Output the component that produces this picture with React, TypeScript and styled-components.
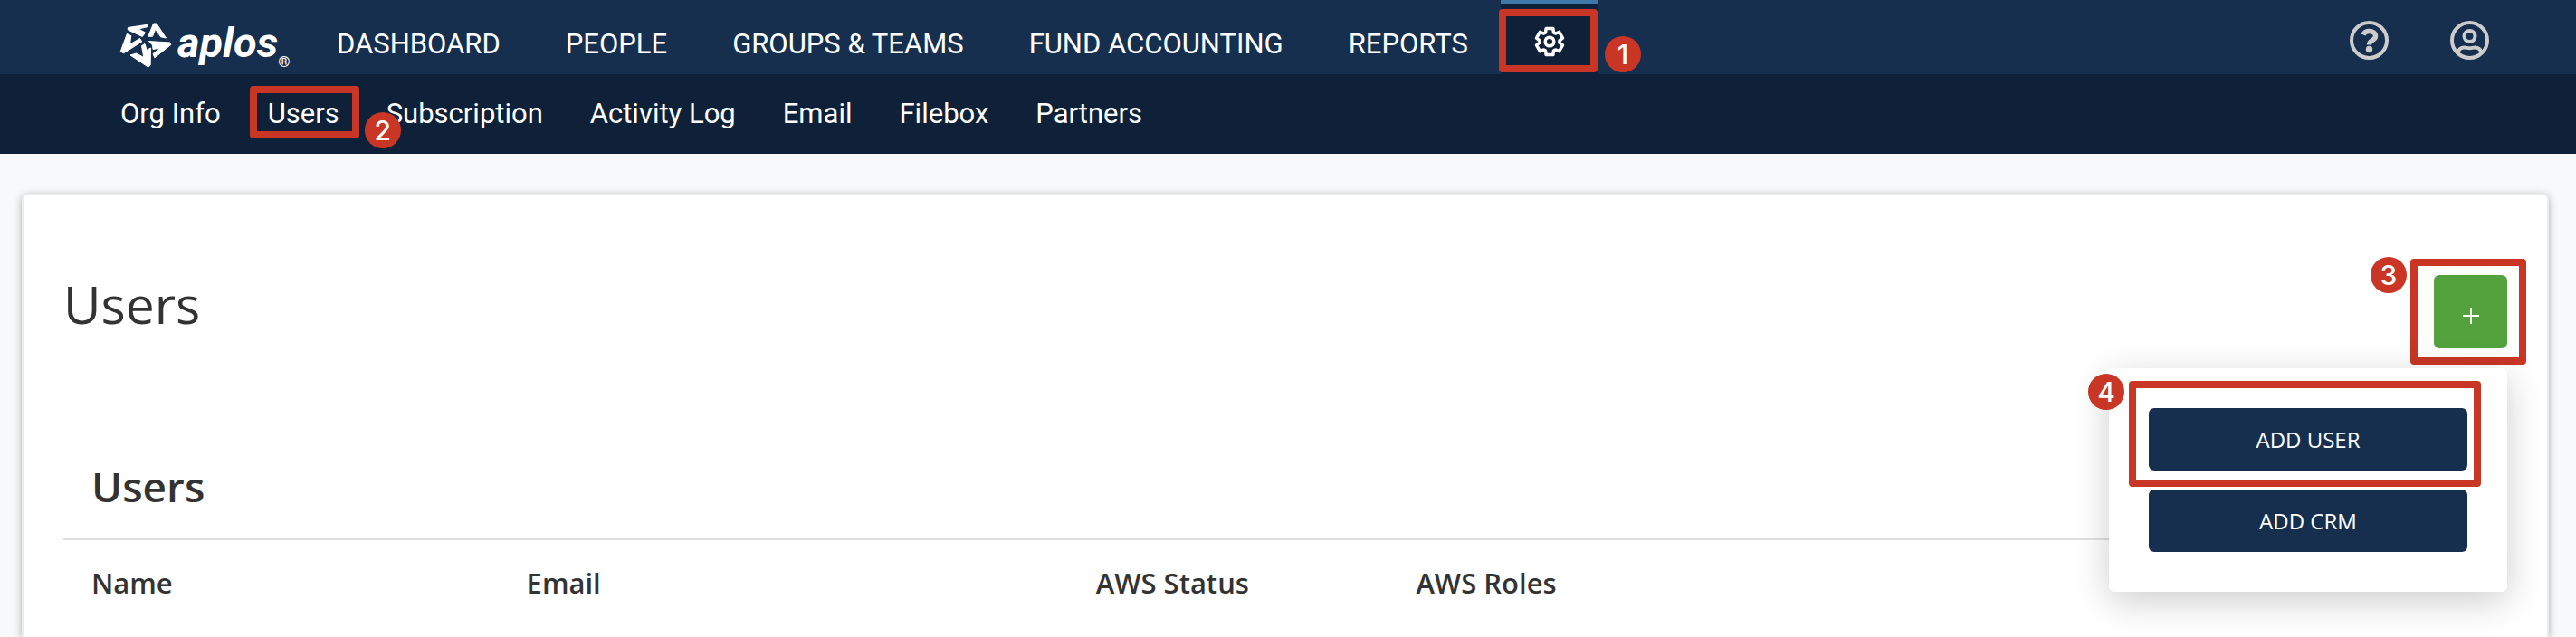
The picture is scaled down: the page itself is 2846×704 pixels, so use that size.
import React from 'react';
import styled, { createGlobalStyle, css } from 'styled-components';

const roboto = `Roboto, "Liberation Sans", sans-serif`;
const openSans = `"Open Sans", "Noto Sans", sans-serif`;

const GlobalStyle = createGlobalStyle`
  * { box-sizing: border-box; }
  body { margin: 0; background: #f8f9fb; color: #333; font-family: ${openSans}; }
`;

const Page = styled.div`
  display: flex;
  flex-direction: column;
  min-height: 100vh;
`;

const TopBar = styled.header`
  display: flex;
  height: 82px;
  padding-left: 132px;
  padding-right: 96px;
  background: #172f4e;
  font-family: ${roboto};
`;

const Brand = styled.a`
  display: flex;
  align-items: flex-start;
  width: 204px;
  color: #fff;
  text-decoration: none;
`;

const BrandMark = styled.svg`
  width: 58px;
  height: 52px;
  margin-top: 24px;
`;

const BrandName = styled.span`
  margin-left: 6px;
  font: italic 700 47px/60px ${roboto};
  padding-top: 17px;
`;

const Registered = styled.span`
  font-size: 17px;
  line-height: 16px;
  margin-top: 60px;
`;

const MainNav = styled.nav`
  display: flex;
  flex: 1;
`;

const mainItem = css`
  display: flex;
  align-items: center;
  color: #fff;
  font-size: 31px;
  line-height: 38px;
  text-decoration: none;
  white-space: nowrap;
`;

const MainLink = styled.a`
  ${mainItem}
  padding: 16px 36px 0;
`;

const SettingsLink = styled.a`
  ${mainItem}
  position: relative;
  padding: 5px 37px 0;
  border-top: 4px solid #3f78a8;
  background: #0f2138;
`;

const Account = styled.div`
  display: flex;
  align-items: center;
  gap: 68px;
  padding-top: 6px;
`;

const IconButton = styled.button`
  display: flex;
  padding: 0;
  border: 0;
  background: none;
  color: #ccc;
`;

const SubNav = styled.nav`
  display: flex;
  gap: 52px;
  height: 88px;
  padding: 0 133px;
  background: #0f2138;
  font-family: ${roboto};
`;

const SubLink = styled.a`
  position: relative;
  padding-top: 25px;
  color: #fff;
  font-size: 31px;
  line-height: 38px;
  text-decoration: none;
  white-space: nowrap;
`;

const Highlight = styled.span<{ $inset: string }>`
  position: absolute;
  inset: ${(p) => p.$inset};
  border: 8px solid #c93625;
  border-radius: 4px;
  pointer-events: none;
`;

const Badge = styled.span<{ $left: number; $top: number }>`
  position: absolute;
  left: ${(p) => p.$left}px;
  top: ${(p) => p.$top}px;
  z-index: 1;
  width: 40px;
  height: 40px;
  border-radius: 50%;
  background: #c93625;
  color: #fff;
  font: 500 30px/40px Inter, sans-serif;
  text-align: center;
`;

const Card = styled.main`
  flex: 1;
  margin: 44px 30px 0 24px;
  padding: 88px 44px 0;
  border: 2px solid #ebecee;
  border-bottom: 0;
  border-radius: 6px 6px 0 0;
  background: #fff;
  box-shadow: 0 2px 10px rgba(0, 0, 0, 0.3);
`;

const PageHeader = styled.div`
  display: flex;
  justify-content: space-between;
`;

const PageTitle = styled.h1`
  margin: 0;
  font-size: 57px;
  line-height: 64px;
  font-weight: 400;
`;

const AddArea = styled.div`
  position: relative;
`;

const AddButton = styled.button`
  display: flex;
  align-items: center;
  justify-content: center;
  width: 81px;
  height: 81px;
  padding: 9px 0 0;
  border: 0;
  border-radius: 6px;
  background: #54a23d;
`;

const AddMenu = styled.div`
  position: absolute;
  top: 103px;
  right: 0;
  display: grid;
  gap: 21px;
  width: 440px;
  padding: 44px;
  border-radius: 6px;
  background: #fff;
  box-shadow: 0 10px 40px rgba(0, 0, 0, 0.2);
`;

const MenuButton = styled.button`
  height: 69px;
  border: 0;
  border-radius: 6px;
  background: #172f4e;
  color: #fff;
  font: 400 24px/34px ${openSans};
`;

const SectionTitle = styled.h2`
  margin: 0;
  padding: 117px 31px 23px;
  border-bottom: 2px solid #e0e0e0;
  font-size: 46px;
  line-height: 70px;
  font-weight: 600;
`;

const Table = styled.table`
  width: 100%;
  border-collapse: collapse;
  table-layout: fixed;
`;

const HeadCell = styled.th<{ $share?: string }>`
  width: ${(p) => p.$share ?? 'auto'};
  padding: 26px 31px;
  font-size: 31px;
  line-height: 42px;
  font-weight: 600;
  text-align: left;
`;

// Outline of a six-toothed gear centred on (17, 17).
const gearOutline = Array.from({ length: 6 }, (_, i) => i * 60 - 90)
  .flatMap((a) => [
    [a - 24, 11],
    [a - 15, 15],
    [a + 15, 15],
    [a + 24, 11],
  ])
  .map(([deg, r]) => {
    const t = (deg * Math.PI) / 180;
    return `${(17 + r * Math.cos(t)).toFixed(2)},${(17 + r * Math.sin(t)).toFixed(2)}`;
  })
  .join(' ');

const Gear = () => (
  <svg width="34" height="34" viewBox="0 0 34 34" fill="none" stroke="currentColor" strokeWidth="3.5" strokeLinejoin="round" aria-hidden="true">
    <polygon points={gearOutline} />
    <circle cx="17" cy="17" r="4.8" />
  </svg>
);

const sections = ['DASHBOARD', 'PEOPLE', 'GROUPS & TEAMS', 'FUND ACCOUNTING', 'REPORTS'];
const pages = ['Org Info', 'Users', 'Subscription', 'Activity Log', 'Email', 'Filebox', 'Partners'];
const columns = [
  { name: 'Name', share: '17.8%' },
  { name: 'Email', share: '23.3%' },
  { name: 'AWS Status', share: '13.1%' },
  { name: 'AWS Roles' },
];

export default function App() {
  return (
    <Page>
      <GlobalStyle />
      <TopBar>
        <Brand href="#">
          <BrandMark viewBox="0 0 58 52" fill="#fff" stroke="#fff" strokeLinejoin="round" aria-hidden="true">
            <path d="M9.300 6.500 31.300 3.200 30.500 5.800 21 8 28.500 12 25.300 16.500 9.300 9Z" />
            <path d="M37.500 2h3.500L51.500 18 45.500 16.800 39.700 8.300 36.500 16.300H31.800Z" />
            <path d="M32.500 21.500 56 23 56.800 25.500 38.900 39.800 37 35.500 45 29 37 30.500 36.500 26Z" />
            <path d="M28 24.500 30.200 31.500 34.500 29 34.200 47.500 32 50.300 12 37 18.700 35 26.800 39.500 24.500 26.500Z" />
            <path d="M8.300 13.500 12.800 15.500 11.500 25 22.500 18.500 24.800 22 4.700 34.800 1.200 33Z" />
          </BrandMark>
          <BrandName>aplos</BrandName>
          <Registered>®</Registered>
        </Brand>
        <MainNav aria-label="Main">
          {sections.map((s) => <MainLink key={s} href="#">{s}</MainLink>)}
          <SettingsLink href="#" aria-label="Settings">
            <Gear />
            <Highlight $inset="6px 1px 2px -2px" />
            <Badge $left={115} $top={36}>1</Badge>
          </SettingsLink>
        </MainNav>
        <Account>
          <IconButton aria-label="Help">
            <svg width="43" height="43" viewBox="0 0 43 43" fill="none" stroke="currentColor">
              <circle cx="21.500" cy="21.500" r="19.500" strokeWidth="4" />
              <path d="M15 15.500c1-2.800 3.500-4 6.500-4 4 0 7 2 7 5.500 0 5-7 4-7 9.500" strokeWidth="5.500" />
              <circle cx="21.500" cy="31.500" r="3.700" fill="currentColor" stroke="none" />
            </svg>
          </IconButton>
          <IconButton aria-label="Account">
            <svg width="43" height="43" viewBox="0 0 43 43" fill="none" stroke="currentColor" strokeWidth="4">
              <circle cx="21.500" cy="21.500" r="19.500" />
              <circle cx="21.500" cy="17" r="6" />
              <path d="M8.500 35c1-3.500 4-5.500 7-5.500 2.500 0 3.500.8 6 .8s3.500-.8 6-.8c3 0 6 2 7 5.500" />
            </svg>
          </IconButton>
        </Account>
      </TopBar>
      <SubNav aria-label="Settings">
        {pages.map((p) => (
          <SubLink key={p} href="#">
            {p}
            {p === 'Users' && (
              <>
                <Highlight $inset="13px -22px 17px -20px" />
                <Badge $left={107} $top={42}>2</Badge>
              </>
            )}
          </SubLink>
        ))}
      </SubNav>
      <Card>
        <PageHeader>
          <PageTitle>Users</PageTitle>
          <AddArea>
            <AddButton aria-label="Add">
              <svg width="20" height="20" viewBox="0 0 20 20" stroke="#fff" strokeWidth="2">
                <path d="M10 1v18M1 10h18" />
              </svg>
            </AddButton>
            <Highlight $inset="-18px -21px -18px -26px" />
            <Badge $left={-70} $top={-20}>3</Badge>
            <AddMenu>
              <MenuButton>ADD USER</MenuButton>
              <MenuButton>ADD CRM</MenuButton>
              <Highlight $inset="14px 29px 116px 22px" />
              <Badge $left={-23} $top={6}>4</Badge>
            </AddMenu>
          </AddArea>
        </PageHeader>
        <SectionTitle>Users</SectionTitle>
        <Table>
          <thead>
            <tr>
              {columns.map((c) => <HeadCell key={c.name} scope="col" $share={c.share}>{c.name}</HeadCell>)}
            </tr>
          </thead>
        </Table>
      </Card>
    </Page>
  );
}
